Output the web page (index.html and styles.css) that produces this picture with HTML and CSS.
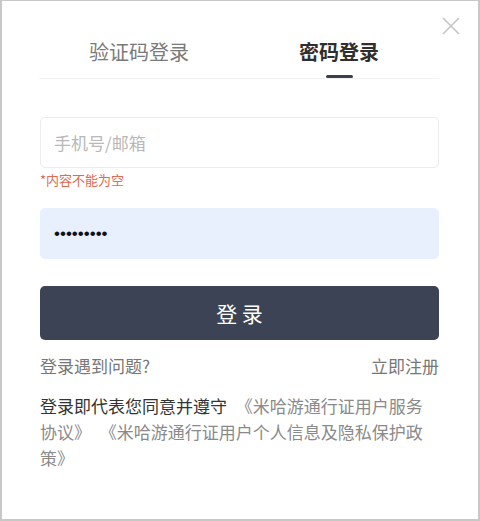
FILE: index.html
```html
<!DOCTYPE html>
<html lang="zh">
<head>
<meta charset="utf-8">
<link rel="stylesheet" href="styles.css">
</head>
<body>
<div class="dialog">
  <button class="close" aria-label="关闭">
    <svg width="18" height="18" viewBox="0 0 18 18"><path d="M1 1L17 17M17 1L1 17" stroke="#c4c4c4" stroke-width="1.6" fill="none"/></svg>
  </button>
  <div class="tabs">
    <div class="tab">验证码登录</div>
    <div class="tab active">密码登录</div>
  </div>
  <div class="form">
    <div class="field"><span class="placeholder">手机号/邮箱</span></div>
    <div class="error">*内容不能为空</div>
    <div class="field filled"><span class="dots">•••••••••</span></div>
    <button class="submit">登 录</button>
    <div class="links">
      <span>登录遇到问题?</span>
      <span>立即注册</span>
    </div>
    <p class="agree">登录即代表您同意并遵守 <span class="lnk">《米哈游通行证用户服务协议》 《米哈游通行证用户个人信息及隐私保护政策》</span></p>
  </div>
</div>
</body>
</html>
```
FILE: styles.css
```css
* { box-sizing: border-box; }
html, body { margin: 0; padding: 0; background: #fff; }
body { font-family: "Noto Sans CJK SC", "Liberation Sans", sans-serif; }
.dialog {
  position: relative;
  width: 480px;
  height: 521px;
  border: 1px solid #c8c8c8;
  border-width: 1px 2px 2px 2px;
  padding: 0 39px 0 37px;
}
.close {
  position: absolute;
  top: 16px;
  right: 18px;
  border: 0;
  background: none;
  padding: 0;
  width: 18px;
  height: 18px;
}
.close svg { display: block; }
.tabs {
  display: flex;
  border-bottom: 1px solid #f2f2f2;
  padding-top: 36px;
  height: 78px;
}
.tab {
  flex: 1;
  text-align: center;
  font-size: 20px;
  line-height: 30px;
  color: #7a7a7a;
  position: relative;
}
.tab.active {
  color: #2f2f2f;
  font-weight: 700;
}
.tab.active::after {
  content: "";
  position: absolute;
  left: 50%;
  margin-left: -13px;
  top: 38px;
  width: 27px;
  height: 3px;
  border-radius: 2px;
  background: #3a3f4e;
}
.form { padding-top: 38px; padding-left: 1px; }
.field {
  height: 51px;
  border: 1px solid #ececec;
  border-radius: 5px;
  display: flex;
  align-items: center;
  padding-left: 13px;
  font-size: 17px;
}
.placeholder { color: #b8b8b8; }
.error {
  color: #e06a52;
  font-size: 13px;
  line-height: 16px;
  margin-top: 4px;
  margin-bottom: 20px;
}
.field.filled {
  background: #e8f0fe;
  border-color: #e8f0fe;
}
.dots { color: #111; font-size: 17px; font-family: "Liberation Sans", sans-serif; letter-spacing: 0; }
.submit {
  display: block;
  width: 100%;
  height: 54px;
  margin-top: 27px;
  border: 0;
  border-radius: 5px;
  background: #3b4354;
  color: #fff;
  font-family: inherit;
  font-size: 21px;
}
.links {
  display: flex;
  justify-content: space-between;
  margin-top: 14px;
  font-size: 17px;
  line-height: 24px;
  color: #777;
}
.agree {
  margin: 15px 0 0;
  font-size: 17px;
  line-height: 26px;
  color: #333;
  padding-right: 11px;
  word-spacing: 5px;
}
.lnk { color: #8a8a8a; }
```
